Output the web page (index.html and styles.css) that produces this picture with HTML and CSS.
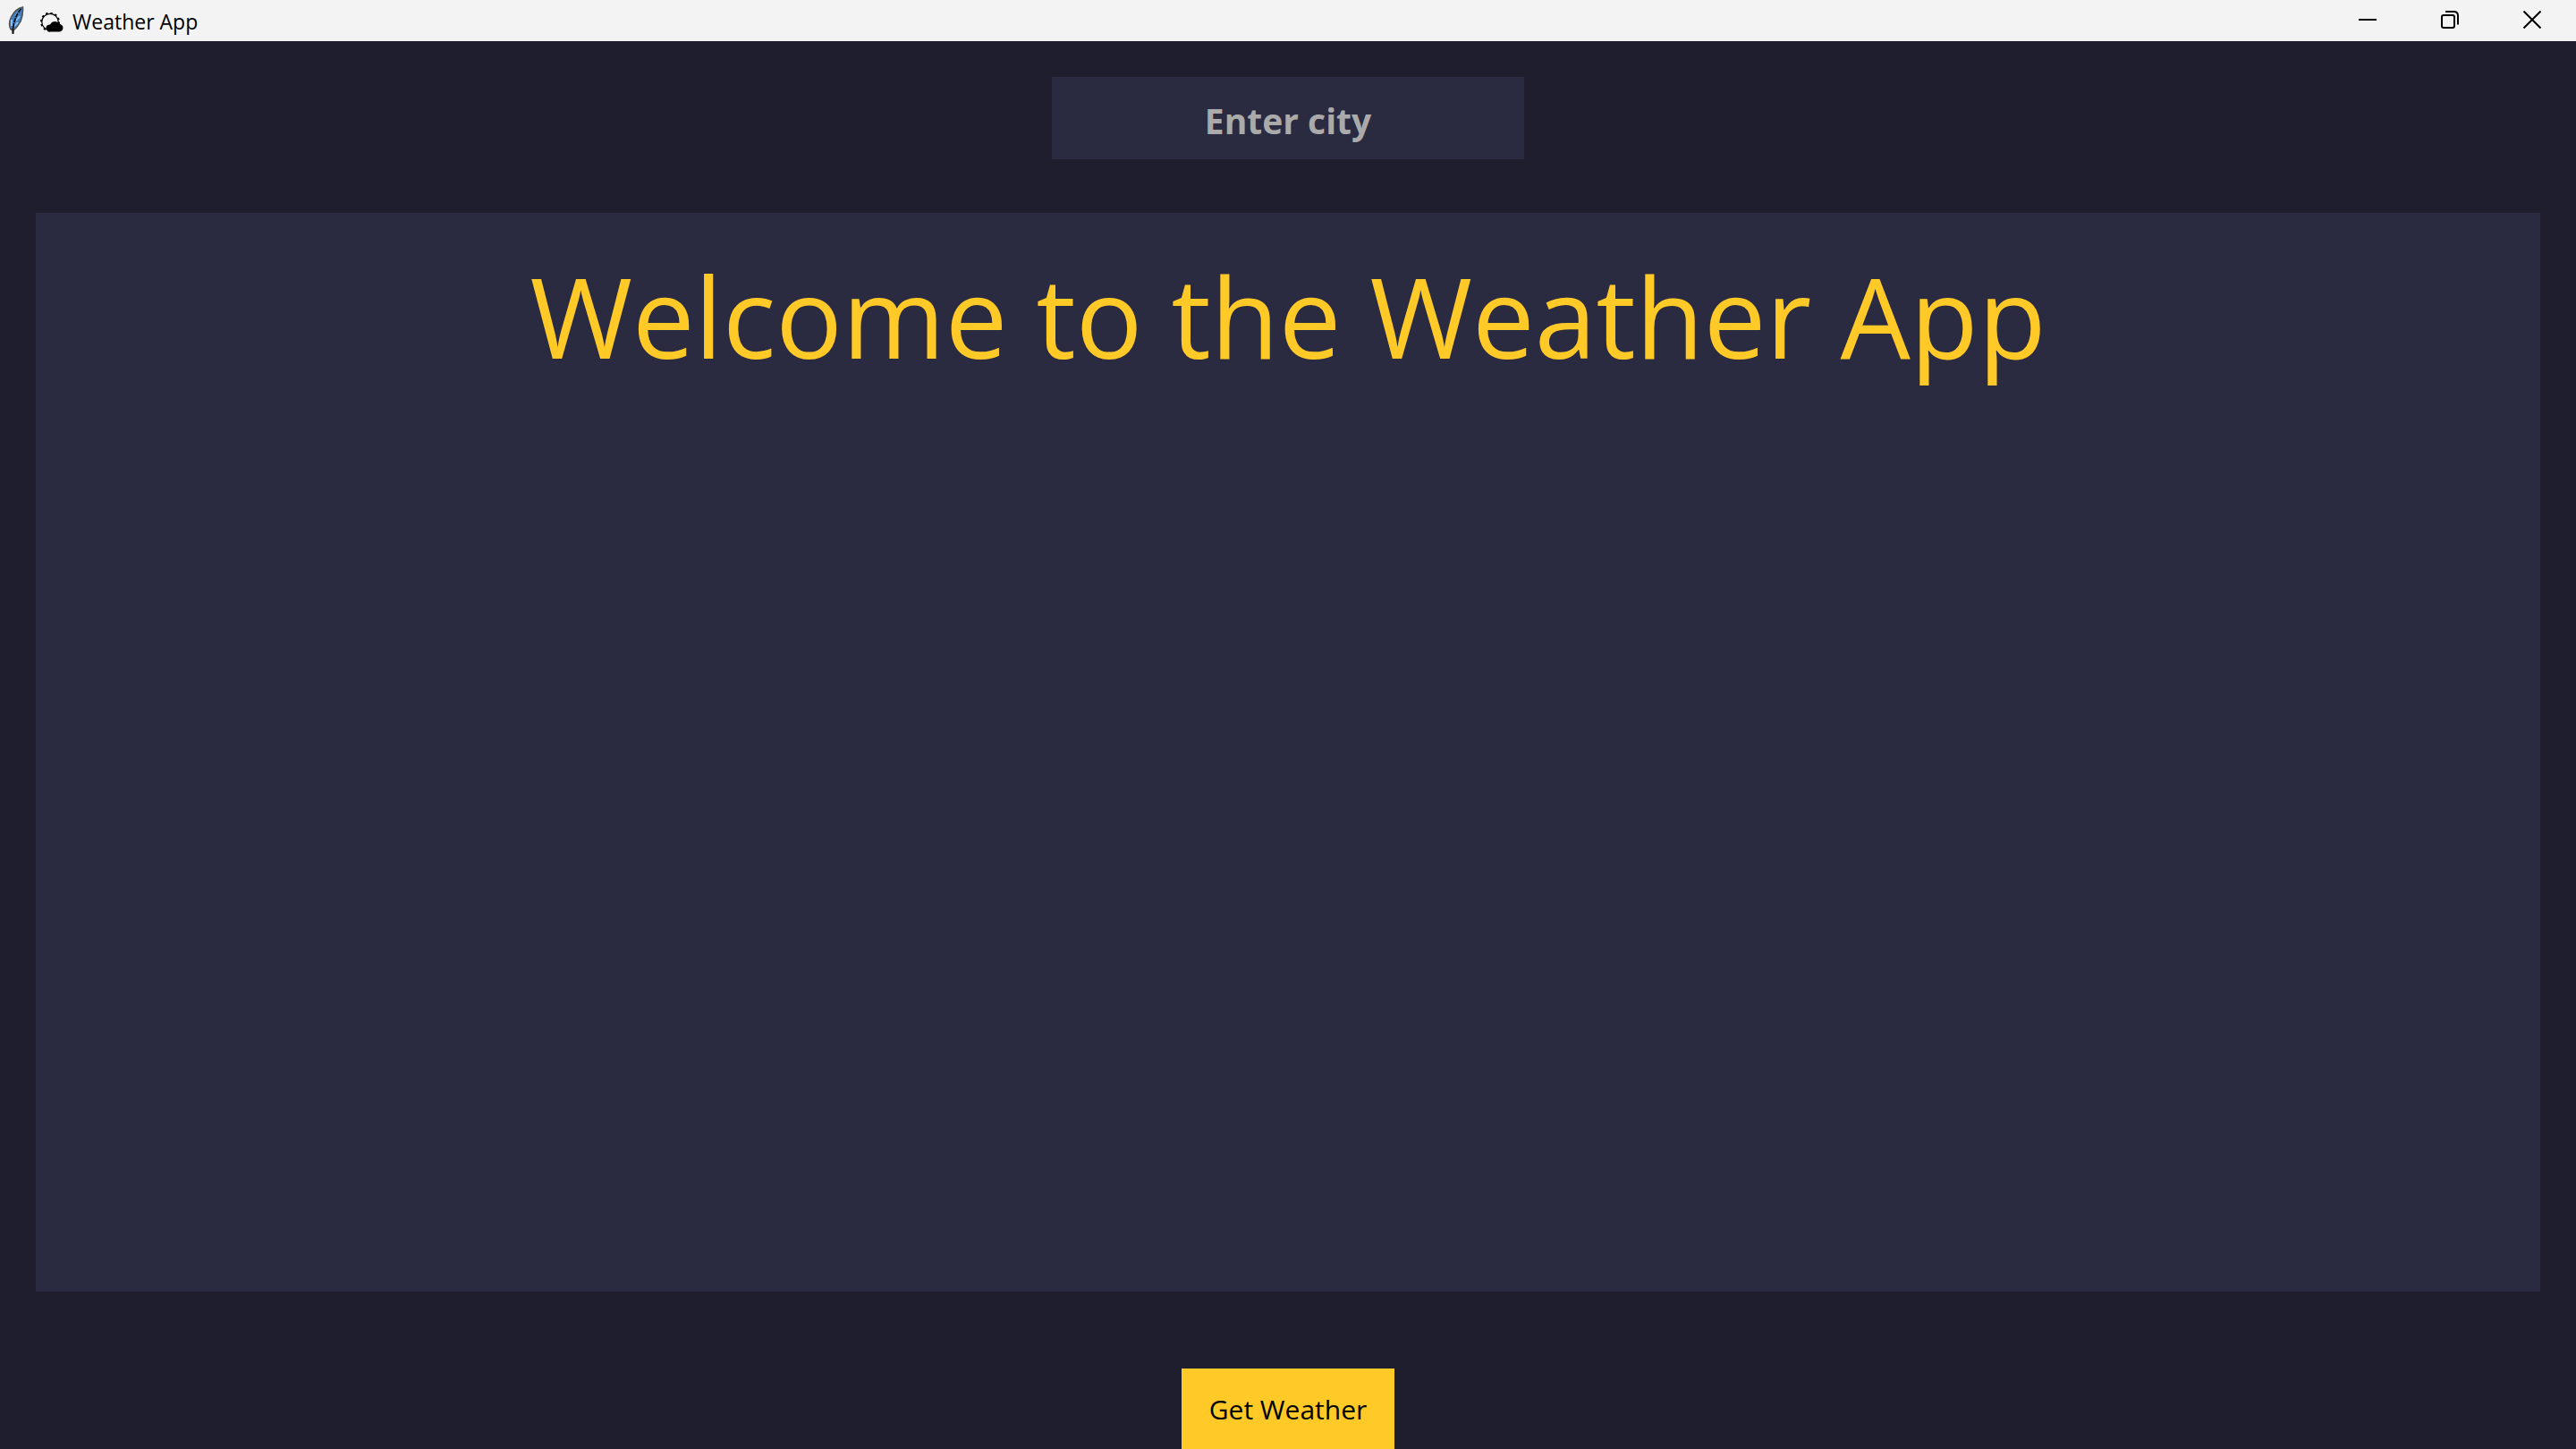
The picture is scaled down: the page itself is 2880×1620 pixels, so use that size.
FILE: index.html
```html
<!DOCTYPE html>
<html lang="en">
<head>
<meta charset="utf-8">
<title>Weather App</title>
<link rel="stylesheet" href="styles.css">
</head>
<body>
<header class="titlebar">
  <svg class="feather" viewBox="0 0 18 32" aria-hidden="true">
    <path d="M16.500 1C11 2 6.500 6 3.500 12C1 17 1 22 3 26L6 27L10 23L14 17C16 12 17 7 16.500 1Z" fill="#3f7fc4" stroke="#555" stroke-width="1.500"/>
    <path d="M11 7L9 11M13 11L9 16M4 15L4 22M11 18L7 22" stroke="#8bbdf0" stroke-width="2"/>
    <path d="M14.500 3C10 8 7 15 5.500 25L5.500 31" fill="none" stroke="#111" stroke-width="1.800" stroke-dasharray="5 1"/>
    <path d="M5.500 24V31" stroke="#222" stroke-width="2"/>
  </svg>
  <svg class="weather" viewBox="0 0 26 22" aria-hidden="true">
    <circle cx="11" cy="10.500" r="9.200" fill="none" stroke="#000" stroke-width="1.200"/>
    <circle cx="11" cy="10.500" r="10" fill="none" stroke="#000" stroke-width="2" stroke-dasharray="2.400 2.836"/>
    <path d="M12 21.500C8.500 21.500 6.500 19.500 6.500 17C6.500 14.500 9 13.500 11 13.500C12.500 11 15 9.800 17.500 10.200C20 10.400 21.500 12 22 13C24 13.300 25.500 15 25.500 17.200C25.500 19.800 23.500 21.500 21 21.500Z" fill="#000"/>
  </svg>
  <span class="caption">Weather App</span>
  <div class="controls">
    <button class="control" type="button" aria-label="Minimize">
      <svg class="glyph" viewBox="0 0 20 20"><path d="M0 10H20"/></svg>
    </button>
    <button class="control" type="button" aria-label="Restore">
      <svg class="glyph" viewBox="0 0 20 20"><rect x="1" y="5" width="14" height="14" rx="2"/><path d="M5 1H14.500Q19 1 19 5.500V15.500"/></svg>
    </button>
    <button class="control" type="button" aria-label="Close">
      <svg class="glyph" viewBox="0 0 20 20"><path d="M.5.500L19.500 19.500M19.500.500L.5 19.500"/></svg>
    </button>
  </div>
</header>
<main class="app">
  <input class="city" type="text" placeholder="Enter city" aria-label="City">
  <section class="panel">
    <h1 class="welcome">Welcome to the Weather App</h1>
  </section>
  <button class="submit" type="button">Get Weather</button>
</main>
</body>
</html>
```
FILE: styles.css
```css
* {
  box-sizing: border-box;
}

body {
  margin: 0;
  min-height: 100vh;
  display: flex;
  flex-direction: column;
  background: #1e1e2e;
  font-family: "Open Sans", "Noto Sans", sans-serif;
}

button {
  border: 0;
  font-family: inherit;
}

.titlebar {
  display: flex;
  align-items: center;
  height: 46px;
  padding-left: 9px;
  background: #f3f3f3;
  color: #000;
}

.feather {
  width: 18px;
  height: 32px;
  margin-right: 18px;
}

.weather {
  width: 26px;
  height: 22px;
  margin: 4px 10px 0 0;
}

.caption {
  font-size: 23px;
  line-height: 32px;
  padding-top: 2px;
}

.controls {
  display: flex;
  height: 100%;
  margin-left: auto;
  padding-right: 3px;
}

.control {
  display: flex;
  align-items: center;
  justify-content: center;
  width: 92px;
  padding: 0 0 2px;
  background: transparent;
}

.glyph {
  width: 20px;
  height: 20px;
  fill: none;
  stroke: #000;
  stroke-width: 2;
}

.app {
  flex: 1;
  display: flex;
  flex-direction: column;
  align-items: center;
  padding: 40px 40px 0;
}

.city {
  width: 528px;
  height: 92px;
  padding: 4px 0 0;
  border: 0;
  background: #2a2a40;
  color: #fff;
  font-family: inherit;
  font-size: 39px;
  font-weight: 700;
  text-align: center;
}

.city::placeholder {
  color: #aaa;
  opacity: 1;
}

.panel {
  flex: 1;
  align-self: stretch;
  margin: 60px 0 86px;
  padding: 30px 40px;
  background: #2a2a40;
}

.welcome {
  margin: 0;
  color: #ffca28;
  font-size: 124px;
  font-weight: 400;
  line-height: 170px;
  text-align: center;
}

.submit {
  width: 238px;
  height: 90px;
  padding: 0;
  background: #ffca28;
  color: #000;
  font-size: 30px;
}
```
